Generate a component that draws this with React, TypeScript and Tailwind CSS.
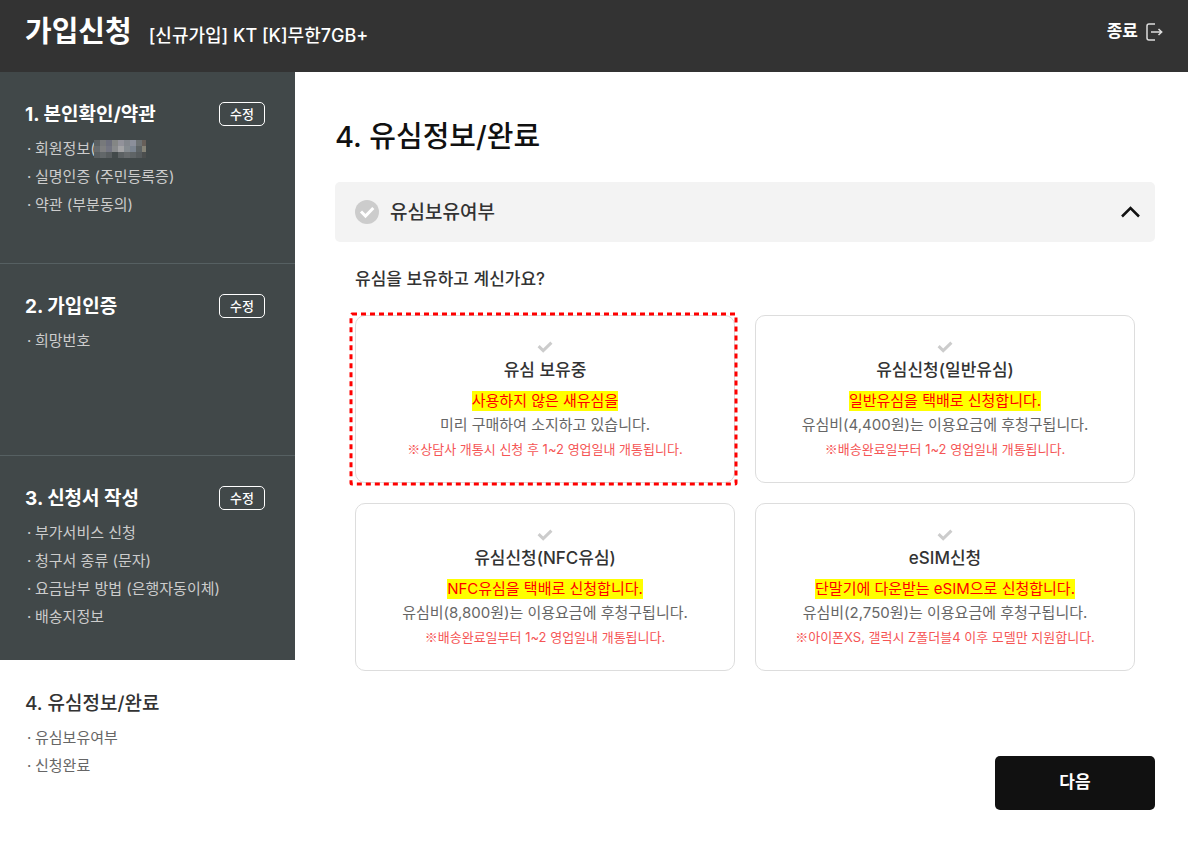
import { useState } from 'react';

type Step = {
  id: number;
  title: string;
  items: string[];
  masked?: boolean;
  done: boolean;
};

type UsimOption = {
  id: string;
  title: string;
  highlight: string;
  description: string;
  note: string;
  marked?: boolean;
};

const steps: Step[] = [
  {
    id: 1,
    title: '본인확인/약관',
    items: ['회원정보(', '실명인증 (주민등록증)', '약관 (부분동의)'],
    masked: true,
    done: true
  },
  { id: 2, title: '가입인증', items: ['희망번호'], done: true },
  {
    id: 3,
    title: '신청서 작성',
    items: ['부가서비스 신청', '청구서 종류 (문자)', '요금납부 방법 (은행자동이체)', '배송지정보'],
    done: true
  },
  { id: 4, title: '유심정보/완료', items: ['유심보유여부', '신청완료'], done: false }
];

const options: UsimOption[] = [
  {
    id: 'own',
    title: '유심 보유중',
    highlight: '사용하지 않은 새유심을',
    description: '미리 구매하여 소지하고 있습니다.',
    note: '상담사 개통시 신청 후 1~2 영업일내 개통됩니다.',
    marked: true
  },
  {
    id: 'normal',
    title: '유심신청(일반유심)',
    highlight: '일반유심을 택배로 신청합니다.',
    description: '유심비(4,400원)는 이용요금에 후청구됩니다.',
    note: '배송완료일부터 1~2 영업일내 개통됩니다.'
  },
  {
    id: 'nfc',
    title: '유심신청(NFC유심)',
    highlight: 'NFC유심을 택배로 신청합니다.',
    description: '유심비(8,800원)는 이용요금에 후청구됩니다.',
    note: '배송완료일부터 1~2 영업일내 개통됩니다.'
  },
  {
    id: 'esim',
    title: 'eSIM신청',
    highlight: '단말기에 다운받는 eSIM으로 신청합니다.',
    description: '유심비(2,750원)는 이용요금에 후청구됩니다.',
    note: '아이폰XS, 갤럭시 Z폴더블4 이후 모델만 지원합니다.'
  }
];

const mosaic = [
  ['#5b6062', '#77797b', '#6d6f7d', '#848685', '#92929a', '#83878d', '#8b8f9b', '#6c7173', '#675f59'],
  ['#666b6e', '#7e7f80', '#737581', '#888a8c', '#a3a3a5', '#858b90', '#7b8490', '#5d6365', '#858377'],
  ['#595e60', '#626769', '#585d5f', '#434a4b', '#5c6163', '#666a6c', '#5f6466', '#565b5d', '#4b4e4e']
];

// Hides the member name
function Mosaic() {
  return (
    <svg width="52" height="18" viewBox="0 0 52 18" shapeRendering="crispEdges" className="-ml-0.5" aria-hidden="true">
      {mosaic.map((row, y) =>
        row.map((fill, x) => <rect key={`${x}-${y}`} x={x * 6} y={y * 6} width="6" height="6" fill={fill} />)
      )}
    </svg>
  );
}

function StepSection({ step }: { step: Step }) {
  return (
    <section
      className={
        step.done
          ? 'min-h-48 border-b border-[#566062] bg-[#414849] px-[25px] pt-[30px] pb-[29px] text-[#cccccc] last:border-b-0'
          : 'border-t border-white bg-white px-[25px] py-[30px] text-[#666666]'
      }
    >
      <div className="flex h-6 items-center justify-between pr-[5px]">
        <h2 className={step.done ? 'pt-0.5 text-[19px] font-bold text-white' : 'pt-0.5 text-[19px] font-medium text-[#333333]'}>
          {step.id}. {step.title}
        </h2>
        {step.done && (
          <button type="button" className="h-6 w-[46px] rounded-[5px] border border-white text-[13px] font-medium leading-none text-white">
            수정
          </button>
        )}
      </div>
      <ul className="mt-[9px] text-[15px] leading-7">
        {step.items.map((item, i) => (
          <li key={item} className="flex items-center">
            <span className="w-[10px] shrink-0 pl-0.5">·</span>
            {item}
            {step.masked && i === 0 && <Mosaic />}
          </li>
        ))}
      </ul>
    </section>
  );
}

function OptionCard({ option, checked, onSelect }: { option: UsimOption; checked: boolean; onSelect: () => void }) {
  return (
    <label className="relative flex cursor-pointer flex-col items-center rounded-[10px] border border-[#dddddd] px-4 pt-[25px] pb-[21px] text-center">
      <input type="radio" name="usim" className="sr-only" checked={checked} onChange={onSelect} />
      <svg width="16" height="12" viewBox="0 0 16 12" fill="none" className={checked ? 'text-[#ff0000]' : 'text-[#cccccc]'} aria-hidden="true">
        <path d="M1.6 5.2 6.2 9.6 14.4 1.6" stroke="currentColor" strokeWidth="3" />
      </svg>
      <strong className="pt-px text-[17px] leading-8 font-medium text-[#333333]">{option.title}</strong>
      <span className="mt-[3px] flex flex-col items-center text-[15px] leading-6 text-[#666666]">
        <span className="flex h-6 items-center">
          <mark className="bg-[#ffff00] leading-5 text-[#ff0000]">{option.highlight}</mark>
        </span>
        <span>{option.description}</span>
        <span className="text-[13px] text-[#f55555]">
          <span className="font-['Noto_Sans_CJK_KR',sans-serif]">※</span>
          {option.note}
        </span>
      </span>
      {option.marked && (
        <span className="pointer-events-none absolute -top-0.5 -right-0.5 -bottom-0.5 -left-[5px]">
          <svg className="size-full overflow-visible" aria-hidden="true">
            <rect width="100%" height="100%" rx="1" fill="none" stroke="#ff0000" strokeWidth="3" strokeDasharray="5 4" />
          </svg>
        </span>
      )}
    </label>
  );
}

export default function App() {
  const [open, setOpen] = useState(true);
  const [selected, setSelected] = useState<string | null>(null);

  return (
    <div className="min-h-screen bg-white font-[Inter,'Noto_Sans_CJK_KR',sans-serif] text-[#333333]">
      <header className="flex h-[72px] items-center justify-between bg-[#333333] px-[25px] pb-2 text-white">
        <div className="flex items-baseline gap-[17px]">
          <h1 className="text-[29px] font-bold">가입신청</h1>
          <p className="text-[18px] font-medium">[신규가입] KT [K]무한7GB+</p>
        </div>
        <button type="button" className="flex items-center gap-2 text-[17px] font-bold">
          종료
          <svg width="17" height="18" viewBox="0 0 17 18" fill="none" stroke="#dddddd" strokeWidth="1.5" aria-hidden="true">
            <path d="M9 1H3Q1 1 1 3V15Q1 17 3 17H9M5 9H15M12.5 6 15.7 9 12.5 12" />
          </svg>
        </button>
      </header>

      <div className="flex">
        <aside className="w-[295px] shrink-0">
          <div>
            {steps.filter((step) => step.done).map((step) => (
              <StepSection key={step.id} step={step} />
            ))}
          </div>
          {steps.filter((step) => !step.done).map((step) => (
            <StepSection key={step.id} step={step} />
          ))}
        </aside>

        <main className="min-w-0 flex-1 pt-10 pr-[33px] pb-8 pl-10">
          <h2 className="text-[29px] leading-[50px] font-medium text-[#111111]">4. 유심정보/완료</h2>

          <button
            type="button"
            aria-expanded={open}
            onClick={() => setOpen(!open)}
            className="mt-5 flex h-[60px] w-full items-center justify-between rounded-[5px] bg-[#f3f3f3] pr-[15px] pl-5"
          >
            <span className="flex items-center gap-[11px] text-[19px] font-medium">
              <svg width="24" height="24" viewBox="0 0 24 24" fill="none" aria-hidden="true">
                <circle cx="12" cy="12" r="12" fill="#cccccc" />
                <path d="M6 11.5 10.5 16 18.3 8" stroke="#ffffff" strokeWidth="3" />
              </svg>
              <span className="pt-0.5">유심보유여부</span>
            </span>
            <svg width="20" height="12" viewBox="0 0 20 12" fill="none" className={open ? '' : 'rotate-180'} aria-hidden="true">
              <path d="M2 10.5 10.5 2 19 10.5" stroke="#111111" strokeWidth="2.5" />
            </svg>
          </button>

          {open && (
            <fieldset className="px-5 pt-[25px]">
              <legend className="float-left w-full text-[17px] leading-6 font-medium">유심을 보유하고 계신가요?</legend>
              <div className="clear-both grid grid-cols-2 gap-5 pt-6">
                {options.map((option) => (
                  <OptionCard
                    key={option.id}
                    option={option}
                    checked={selected === option.id}
                    onSelect={() => setSelected(option.id)}
                  />
                ))}
              </div>
            </fieldset>
          )}

          <div className="mt-[85px] flex justify-end">
            <button type="button" className="h-[54px] w-40 rounded-[5px] bg-[#111111] text-[17px] font-bold text-white">
              다음
            </button>
          </div>
        </main>
      </div>
    </div>
  );
}
